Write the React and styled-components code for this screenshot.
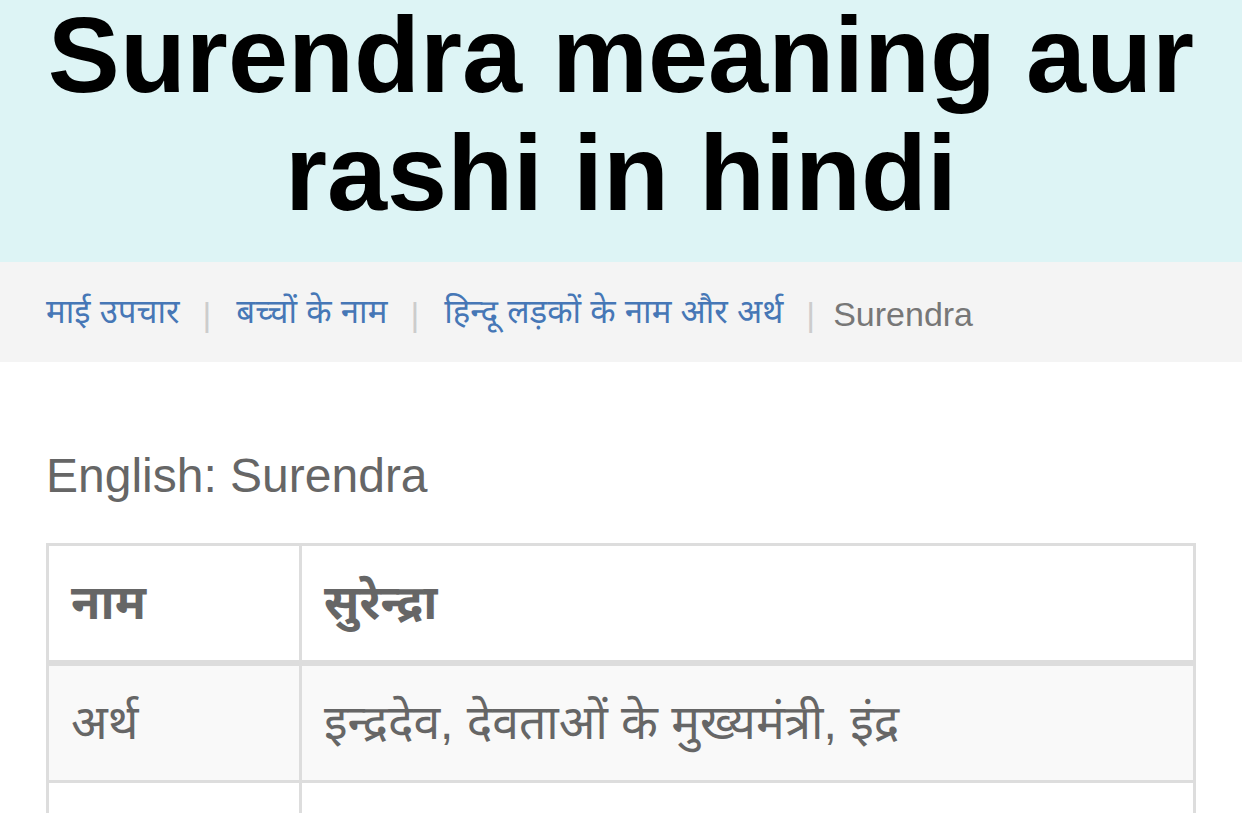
import React from "react";
import styled, { createGlobalStyle } from "styled-components";

const crumbs = [
  { label: "माई उपचार", href: "#" },
  { label: "बच्चों के नाम", href: "#" },
  { label: "हिन्दू लड़कों के नाम और अर्थ", href: "#" },
  { label: "Surendra" },
];

const details = [
  { label: "नाम", value: "सुरेन्द्रा", head: true },
  { label: "अर्थ", value: "इन्द्रदेव, देवताओं के मुख्यमंत्री, इंद्र" },
  { label: "लिंग", value: "लड़का" },
  { label: "राशि", value: "कुंभ" },
  { label: "धर्म", value: "हिन्दू" },
];

const App = () => {
  return (
    <Page>
      <GlobalStyle />
      <Hero>
        <Title>
          gaurav naam ka arth
          <br />
          Surendra meaning aur
          <br />
          rashi in hindi
        </Title>
      </Hero>
      <Breadcrumb>
        {crumbs.map((c, i) => (
          <Crumb key={c.label} first={i === 0} latin={!c.href}>
            {c.href ? <CrumbLink href={c.href}>{c.label}</CrumbLink> : c.label}
          </Crumb>
        ))}
      </Breadcrumb>
      <Content>
        <English>English: Surendra</English>
        <Table>
          <tbody>
            {details.map((d, i) => (
              <Row key={d.label} striped={i % 2 === 1}>
                <Cell as={d.head ? "th" : "td"} head={d.head} narrow>
                  {d.label}
                </Cell>
                <Cell as={d.head ? "th" : "td"} head={d.head}>
                  {d.value}
                </Cell>
              </Row>
            ))}
          </tbody>
        </Table>
      </Content>
    </Page>
  );
};

export default App;
//
const GlobalStyle = createGlobalStyle`
  html, body {
    margin: 0;
    padding: 0;
    background: #ffffff;
  }
  body {
    font-family: "Liberation Sans", "Noto Sans Devanagari", "Lohit Devanagari", "Noto Sans", sans-serif;
    color: #666666;
  }
`;

const Page = styled.div`
  width: 100%;
`;

const Hero = styled.header`
  background: #ddf4f5;
  overflow: hidden;
  padding: 0 46px 30px;
`;

const Title = styled.h1`
  margin: -122px 0 0;
  font-size: 108px;
  line-height: 118px;
  font-weight: 700;
  color: #000000;
  text-align: center;
`;

const Breadcrumb = styled.ol`
  list-style: none;
  margin: 0;
  height: 100px;
  box-sizing: border-box;
  padding: 4px 46px 0;
  background: #f4f4f4;
  display: flex;
  align-items: center;
  font-size: 33px;
  color: #777777;
`;

const Crumb = styled.li`
  display: flex;
  align-items: center;
  font-size: ${(p) => (p.latin ? "34px" : "33px")};
  &::before {
    content: ${(p) => (p.first ? "none" : '"|"')};
    color: #cccccc;
    font-size: 34px;
    font-weight: 300;
    margin: 0 ${(p) => (p.latin ? "18px" : "25px")} 0 23px;
  }
`;

const CrumbLink = styled.a`
  color: #4677b6;
  text-decoration: none;
`;

const Content = styled.main`
  padding: 86px 46px 40px;
`;

const English = styled.p`
  margin: 0 0 39px;
  font-size: 48px;
  line-height: 56px;
  color: #666666;
`;

const Table = styled.table`
  width: 100%;
  border-collapse: collapse;
  border: 3px solid #dddddd;
  font-size: 48px;
  line-height: 60px;
`;

const Row = styled.tr`
  background: ${(p) => (p.striped ? "#f9f9f9" : "#ffffff")};
`;

const Cell = styled.td`
  width: ${(p) => (p.narrow ? "206px" : "auto")};
  padding: 27px 22px;
  text-align: left;
  vertical-align: top;
  border: 3px solid #dddddd;
  border-bottom-width: ${(p) => (p.head ? "6px" : "3px")};
  font-weight: ${(p) => (p.head ? 700 : 400)};
  color: #666666;
`;
